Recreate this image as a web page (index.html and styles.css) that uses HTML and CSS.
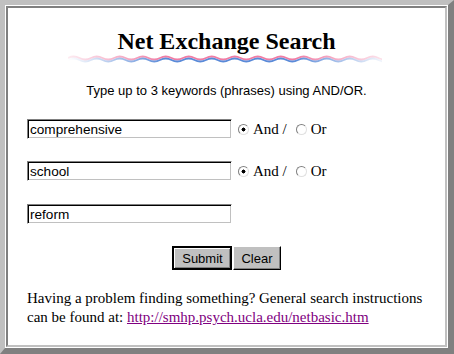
FILE: index.html
```html
<!DOCTYPE html>
<html lang="en">
<head>
    <meta charset="UTF-8">
    <title>Net Exchange Search</title>
    <link rel="stylesheet" href="styles.css">
</head>
<body>

    <div class="frame">
        <div class="panel">
            <h1 class="title">Net Exchange Search</h1>

            <!-- wavy divider under the title -->
            <svg class="wave" width="314" height="10" viewBox="0 0 314 10">
                <defs>
                    <linearGradient id="fadePink" x1="0" x2="1" y1="0" y2="0">
                        <stop offset="0" stop-color="#f07ca4" stop-opacity="0.15"/>
                        <stop offset="0.3" stop-color="#f07ca4" stop-opacity="1"/>
                        <stop offset="0.7" stop-color="#f07ca4" stop-opacity="1"/>
                        <stop offset="1" stop-color="#f07ca4" stop-opacity="0.15"/>
                    </linearGradient>
                    <linearGradient id="fadeBlue" x1="0" x2="1" y1="0" y2="0">
                        <stop offset="0" stop-color="#5a8ad8" stop-opacity="0"/>
                        <stop offset="0.3" stop-color="#5a8ad8" stop-opacity="1"/>
                        <stop offset="0.7" stop-color="#5a8ad8" stop-opacity="1"/>
                        <stop offset="1" stop-color="#5a8ad8" stop-opacity="0"/>
                    </linearGradient>
                </defs>
                <path d="M0 4 q5.75 -3 11.5 0 t11.5 0 t11.5 0 t11.5 0 t11.5 0 t11.5 0 t11.5 0 t11.5 0 t11.5 0 t11.5 0 t11.5 0 t11.5 0 t11.5 0 t11.5 0 t11.5 0 t11.5 0 t11.5 0 t11.5 0 t11.5 0 t11.5 0 t11.5 0 t11.5 0 t11.5 0 t11.5 0 t11.5 0 t11.5 0 t11.5 0 t11.5 0"
                      fill="none" stroke="url(#fadePink)" stroke-width="1.8"/>
                <path d="M0 6 q5.75 -3 11.5 0 t11.5 0 t11.5 0 t11.5 0 t11.5 0 t11.5 0 t11.5 0 t11.5 0 t11.5 0 t11.5 0 t11.5 0 t11.5 0 t11.5 0 t11.5 0 t11.5 0 t11.5 0 t11.5 0 t11.5 0 t11.5 0 t11.5 0 t11.5 0 t11.5 0 t11.5 0 t11.5 0 t11.5 0 t11.5 0 t11.5 0 t11.5 0"
                      fill="none" stroke="url(#fadeBlue)" stroke-width="1.8"/>
            </svg>

            <p class="hint">Type up to 3 keywords (phrases) using AND/OR.</p>

            <form class="search">
                <div class="row first">
                    <input type="text" class="keyword" value="comprehensive">
                    <label class="choice"><input type="radio" name="op1" checked> And /</label>
                    <label class="choice"><input type="radio" name="op1"> Or</label>
                </div>
                <div class="row">
                    <input type="text" class="keyword" value="school">
                    <label class="choice"><input type="radio" name="op2" checked> And /</label>
                    <label class="choice"><input type="radio" name="op2"> Or</label>
                </div>
                <div class="row last">
                    <input type="text" class="keyword" value="reform">
                </div>

                <div class="buttons">
                    <button type="submit" class="btn btn-default">Submit</button>
                    <button type="reset" class="btn">Clear</button>
                </div>
            </form>

            <p class="help">Having a problem finding something? General search instructions can be found at: <a href="#">http://smhp.psych.ucla.edu/netbasic.htm</a></p>
        </div>
    </div>

</body>
</html>
```

FILE: styles.css
```css
body {
    margin: 0;
    font-family: "Liberation Serif", "Times New Roman", serif;
    font-size: 15px;
    color: #000;
}
.frame {
    width: 454px;
    height: 354px;
    box-sizing: border-box;
    border-style: solid;
    border-width: 5px 6px 6px 5px;
    border-color: #c0c0c0 #808080 #808080 #c0c0c0;
    padding: 1px;
    background: #fff;
}
.panel {
    height: 100%;
    box-sizing: border-box;
    border-style: solid;
    border-width: 2px;
    border-color: #808080 #c0c0c0 #c0c0c0 #808080;
    padding: 0 0 0 19px;
}
.title {
    margin: 19px 19px 0 0;
    font-size: 24px;
    line-height: 28px;
    font-weight: bold;
    text-align: center;
}
.wave {
    display: block;
    margin: -1px auto 0 41px;
}
.hint {
    margin: 19px 19px 0 0;
    font-family: "Liberation Sans", Arial, sans-serif;
    font-size: 13px;
    line-height: 15px;
    text-align: center;
}
.search {
    margin: 0;
}
.row {
    display: flex;
    align-items: center;
    height: 20px;
    margin-top: 22px;
}
.row.first {
    margin-top: 21px;
}
.row.last {
    margin-top: 23px;
}
.keyword {
    width: 205px;
    height: 20px;
    box-sizing: border-box;
    margin: 0;
    padding: 0 2px;
    font-family: "Liberation Sans", Arial, sans-serif;
    font-size: 13.6px;
    color: #000;
    border: 1px solid;
    border-color: #808080 #fff #fff #808080;
    box-shadow: inset 1px 1px #000, inset -1px -1px #c0c0c0;
    outline: none;
}
.choice {
    display: flex;
    align-items: center;
    margin-left: 6px;
    line-height: 20px;
}
.choice + .choice {
    margin-left: 9px;
}
.choice input {
    appearance: none;
    width: 11px;
    height: 11px;
    margin: 0 4px 0 0;
    border: 1px solid;
    border-color: #808080 #e0e0e0 #e0e0e0 #808080;
    border-radius: 50%;
    background: #fff;
}
.choice input:checked {
    background: radial-gradient(circle, #000 0 1.8px, #fff 2.2px);
}
.buttons {
    display: flex;
    justify-content: center;
    gap: 1px;
    margin: 22px 19px 0 0;
}
.btn {
    height: 24px;
    margin: 0;
    padding: 0 7px;
    font-family: "Liberation Sans", Arial, sans-serif;
    font-size: 13px;
    color: #000;
    background: #c0c0c0;
    border: 1px solid;
    border-color: #fff #000 #000 #fff;
    box-shadow: inset -1px -1px #808080;
}
.btn-default {
    width: 60px;
    border: 2px solid #000;
    box-shadow: inset 1px 1px #fff, inset -1px -1px #808080;
}
.help {
    margin: 19px 0 0;
    line-height: 19px;
}
.help a {
    color: #800080;
}
```
